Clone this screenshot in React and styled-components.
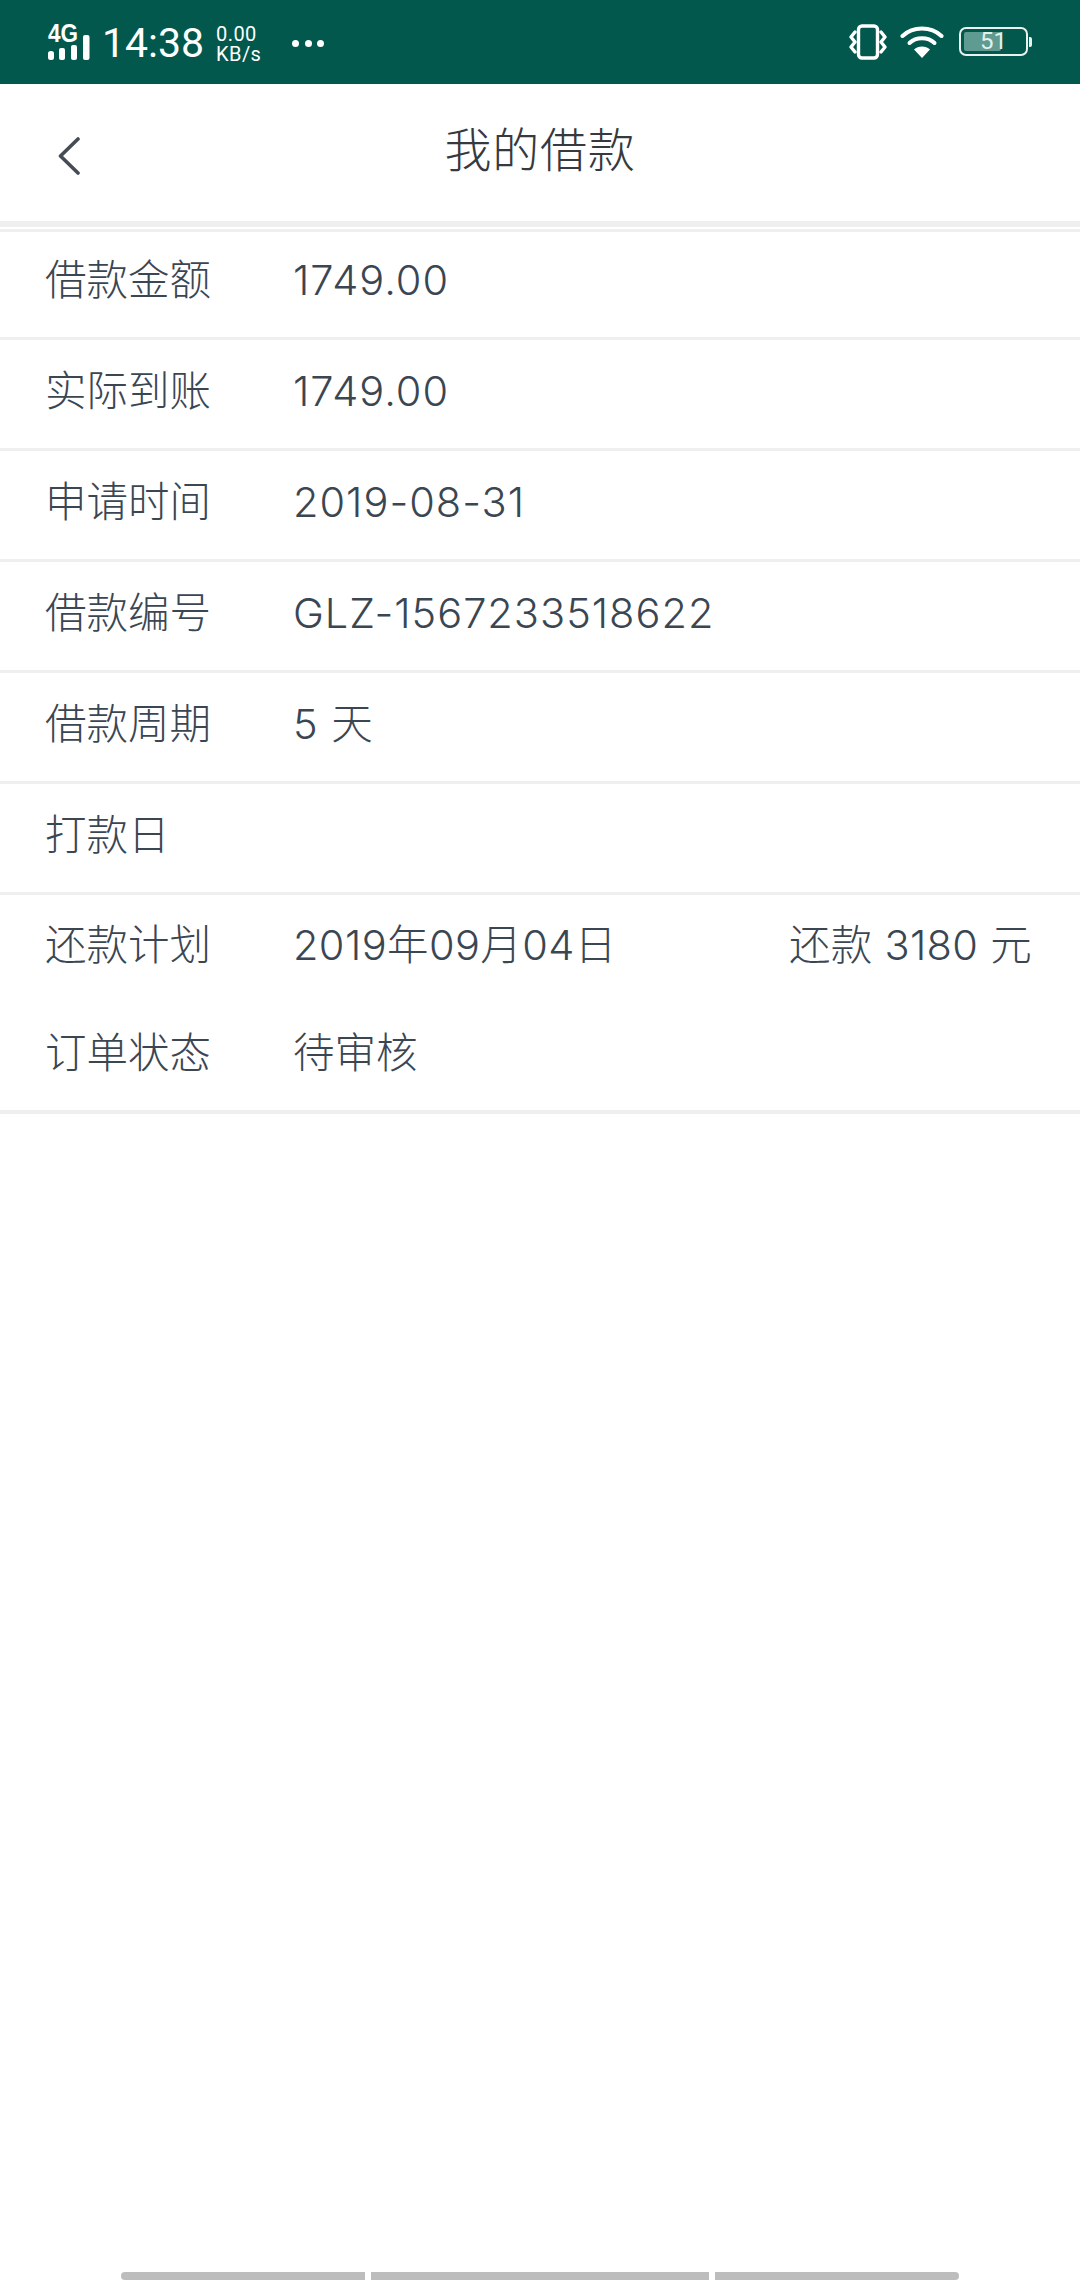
import React from 'react';
import styled, { createGlobalStyle } from 'styled-components';

const details = [
  { label: '借款金额', value: '1749.00' },
  { label: '实际到账', value: '1749.00' },
  { label: '申请时间', value: '2019-08-31' },
  { label: '借款编号', value: 'GLZ-1567233518622' },
  { label: '借款周期', value: '5 天' },
  { label: '打款日', value: '' }
];

function SignalIcon() {
  return (
    <svg width="44" height="37" viewBox="0 0 44 37" fill="#fff" overflow="visible">
      <text x="0" y="18" fontFamily="'Liberation Sans', sans-serif" fontWeight="700" fontSize="25" textLength="30" lengthAdjust="spacingAndGlyphs">4G</text>
      <rect x="0" y="27" width="6" height="9" rx="2.500" />
      <rect x="11" y="24" width="6" height="12" rx="2" />
      <rect x="23" y="21" width="6" height="15" rx="2" />
      <rect x="35" y="11" width="6.500" height="25" rx="2" />
    </svg>
  );
}

function VibrateIcon() {
  return (
    <svg width="38" height="36" viewBox="0 0 38 36" fill="none" stroke="#fff" strokeWidth="3.400">
      <rect x="9.500" y="2" width="19" height="32" rx="3.500" />
      <path d="M6 8 L2 13 L6 18 L2 23 L6 28" strokeLinecap="round" strokeLinejoin="round" />
      <path d="M32 8 L36 13 L32 18 L36 23 L32 28" strokeLinecap="round" strokeLinejoin="round" />
    </svg>
  );
}

function WifiIcon() {
  return (
    <svg width="44" height="33" viewBox="0 0 44 33" fill="none" stroke="#fff" strokeWidth="4" strokeLinecap="round">
      <path d="M2.500 11 C13 1 31 1 41.500 11" />
      <path d="M9.500 18 C16 11.500 28 11.500 34.500 18" />
      <path d="M22 33 L14 24.500 C18 20.500 26 20.500 30 24.500 Z" fill="#fff" stroke="none" />
    </svg>
  );
}

export default function App() {
  return (
    <Page>
      <GlobalStyle />
      <StatusBar>
        <StatusGroup>
          <SignalIcon />
          <Clock>14:38</Clock>
          <NetSpeed>
            <span>0.00</span>
            <span>KB/s</span>
          </NetSpeed>
          <MoreDots>
            <i />
            <i />
            <i />
          </MoreDots>
        </StatusGroup>
        <StatusGroup $right>
          <VibrateIcon />
          <WifiIcon />
          <Battery>
            <BatteryFill />
            <BatteryLevel>51</BatteryLevel>
          </Battery>
        </StatusGroup>
      </StatusBar>

      <Header>
        <BackButton>
          <svg width="24" height="38" viewBox="0 0 24 38" fill="none" stroke="#454c56" strokeWidth="3.600" strokeLinecap="round" strokeLinejoin="round">
            <path d="M21 2 L3.500 19 L21 36" />
          </svg>
        </BackButton>
        <Title>我的借款</Title>
      </Header>
      <HeaderDivider />

      <DetailList>
        {details.map((item) => (
          <Row key={item.label}>
            <Label>{item.label}</Label>
            <Value>{item.value}</Value>
          </Row>
        ))}
        <PlanRow>
          <Label>还款计划</Label>
          <Value $spacing={0.4}>2019年09月04日</Value>
          <Amount>还款 3180 元</Amount>
        </PlanRow>
        <StatusRow>
          <Label>订单状态</Label>
          <Value $spacing={0}>待审核</Value>
        </StatusRow>
      </DetailList>

      <GestureBar>
        <GestureSegment $width={244} $side="left" />
        <GestureSegment $width={338} />
        <GestureSegment $width={244} $side="right" />
      </GestureBar>
    </Page>
  );
}

// --- styled-components ---

const GlobalStyle = createGlobalStyle`
  html, body {
    margin: 0;
    padding: 0;
    background: #fff;
  }
`;

const Page = styled.div`
  width: 1080px;
  height: 2280px;
  display: flex;
  flex-direction: column;
  background: #fff;
  font-family: Inter, "Noto Sans CJK SC", sans-serif;
  overflow: hidden;
`;

const StatusBar = styled.div`
  height: 84px;
  padding: 0 48px;
  display: flex;
  align-items: center;
  justify-content: space-between;
  background: #02584d;
  color: #fff;
`;

const StatusGroup = styled.div`
  display: flex;
  align-items: center;
  gap: 13px;
  margin-top: ${(p) => (p.$right ? '-1px' : '0')};
  margin-right: ${(p) => (p.$right ? '0' : 'auto')};
`;

const Clock = styled.span`
  font-family: Roboto, sans-serif;
  font-size: 41px;
  font-weight: 400;
  line-height: 48px;
  margin-top: 2px;
  margin-left: -3px;
`;

const NetSpeed = styled.div`
  display: flex;
  flex-direction: column;
  font-family: Roboto, sans-serif;
  font-size: 20px;
  line-height: 20px;
  margin-top: 4px;
  margin-left: -1px;
  letter-spacing: 0.4px;
`;

const MoreDots = styled.div`
  display: flex;
  gap: 5.500px;
  margin-left: 18px;
  margin-top: 2px;

  i {
    width: 7px;
    height: 7px;
    border-radius: 50%;
    background: #fff;
  }
`;

const Battery = styled.div`
  position: relative;
  width: 69px;
  height: 29px;
  box-sizing: border-box;
  border: 2px solid #e8f3f0;
  border-radius: 7px;
  margin-left: 2px;
  margin-right: 4px;
  display: flex;
  align-items: center;
  justify-content: center;

  &::after {
    content: '';
    position: absolute;
    right: -6px;
    top: 8px;
    width: 3px;
    height: 10px;
    background: #e8f3f0;
    border-radius: 0 2px 2px 0;
  }
`;

const BatteryFill = styled.div`
  position: absolute;
  left: 3px;
  top: 3px;
  bottom: 3px;
  width: 37px;
  background: #5f9b90;
  border-radius: 2px;
`;

const BatteryLevel = styled.span`
  position: relative;
  font-family: Roboto, sans-serif;
  font-size: 24px;
  line-height: 25px;
  color: #e2f0ec;
`;

const Header = styled.div`
  height: 137px;
  display: grid;
  grid-template-columns: 1fr auto 1fr;
  align-items: center;
  background: #fff;
`;

const BackButton = styled.div`
  display: flex;
  padding-left: 57px;
  margin-top: 7px;
`;

const Title = styled.div`
  font-size: 47px;
  font-weight: 300;
  line-height: 60px;
  letter-spacing: 0.7px;
  color: #36393d;
  margin-top: -5px;
`;

const HeaderDivider = styled.div`
  height: 6px;
  background: #efefef;
  margin-bottom: 2px;
`;

const DetailList = styled.div`
  display: flex;
  flex-direction: column;
`;

const Row = styled.div`
  height: 111px;
  box-sizing: border-box;
  padding: 0 48px 6px 45px;
  display: flex;
  align-items: center;
  border-top: 3px solid #efefef;
  font-size: 41.500px;
  font-weight: 300;
  line-height: 56px;
  color: #3b4653;

  &:first-child {
    height: 108px;
    padding-bottom: 10px;
  }
`;

const PlanRow = styled(Row)`
  height: 108px;
  padding-bottom: 5px;
`;

const StatusRow = styled(Row)`
  height: 114px;
  border-top: none;
  padding-bottom: 4px;
  border-bottom: 4px solid #efefef;
`;

const Label = styled.div`
  width: 248px;
  flex-shrink: 0;
`;

const Value = styled.div`
  flex: 1;
  letter-spacing: ${(p) => p.$spacing ?? 1}px;
`;

const Amount = styled.div`
  white-space: nowrap;
  letter-spacing: 0.3px;
`;

const GestureBar = styled.div`
  margin-top: auto;
  display: flex;
  justify-content: center;
  gap: 6px;
`;

const GestureSegment = styled.div`
  width: ${(p) => p.$width}px;
  height: 8px;
  background: #bdbdbd;
  border-radius: ${(p) =>
    p.$side === 'left' ? '4px 0 0 4px' : p.$side === 'right' ? '0 4px 4px 0' : '0'};
`;
